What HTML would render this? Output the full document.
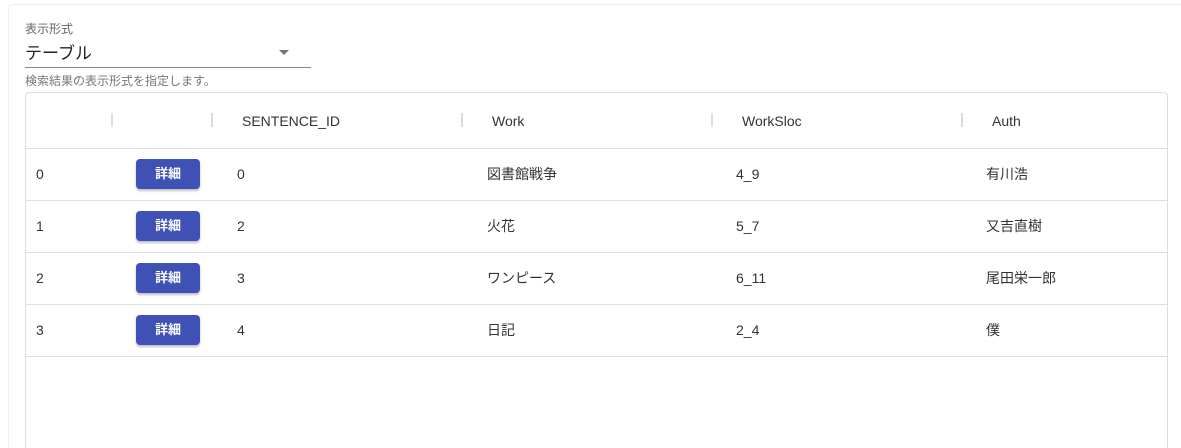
<!DOCTYPE html>
<html style="height:448px;overflow:hidden"><head><meta charset="utf-8"><style>
*{box-sizing:border-box;margin:0;padding:0}
body{width:1181px;height:448px;background:#fff;font-family:"Liberation Sans","Noto Sans CJK JP",sans-serif;overflow:hidden;position:relative;color:#333}
.outer{position:absolute;left:8px;top:4px;width:1190px;height:460px;border:1px solid #eee;border-radius:5px;background:#fff}
.lbl{position:absolute;left:25px;top:20px;font-size:12px;color:#666}
.sel{position:absolute;left:25px;top:39px;font-size:17px;color:#222}
.line{position:absolute;left:25px;top:67px;width:286px;height:1px;background:#888}
.arrow{position:absolute;left:279px;top:50px;width:0;height:0;border-left:5px solid transparent;border-right:5px solid transparent;border-top:5px solid #777}
.help{position:absolute;left:25px;top:72px;font-size:12px;color:#777}
.tbl{position:absolute;left:25px;top:92px;width:1143px;height:370px;border:1px solid #ddd;border-radius:4px}
.hr{position:absolute;left:0;width:100%;height:1px;background:#e0e0e0}
.t{position:absolute;font-size:14px;color:#333;line-height:16px}
.sep{position:absolute;top:20px;width:2px;height:14px;background:#ddd}
.btn{position:absolute;left:110px;width:64px;height:30px;background:#3f51b5;color:#fff;font-size:13px;font-weight:bold;border-radius:4px;text-align:center;line-height:30px;box-shadow:0 2px 2px rgba(0,0,0,.25)}
</style></head><body>
<div class="outer"></div>
<div class="lbl">表示形式</div>
<div class="sel">テーブル</div>
<div class="arrow"></div>
<div class="line"></div>
<div class="help">検索結果の表示形式を指定します。</div>
<div class="tbl">
<div class="sep" style="left:85px"></div>
<div class="sep" style="left:185px"></div>
<div class="sep" style="left:435px"></div>
<div class="sep" style="left:685px"></div>
<div class="sep" style="left:935px"></div>
<div class="t" style="left:216px;top:20px">SENTENCE_ID</div>
<div class="t" style="left:466px;top:20px">Work</div>
<div class="t" style="left:716px;top:20px">WorkSloc</div>
<div class="t" style="left:966px;top:20px">Auth</div>
<div class="hr" style="top:55px"></div>
<div class="t" style="left:10px;top:73px">0</div><div class="btn" style="top:66px">詳細</div><div class="t" style="left:211px;top:73px">0</div><div class="t" style="left:461px;top:73px">図書館戦争</div><div class="t" style="left:710px;top:73px">4_9</div><div class="t" style="left:960px;top:73px">有川浩</div>
<div class="hr" style="top:107px"></div>
<div class="t" style="left:10px;top:125px">1</div><div class="btn" style="top:118px">詳細</div><div class="t" style="left:211px;top:125px">2</div><div class="t" style="left:461px;top:125px">火花</div><div class="t" style="left:710px;top:125px">5_7</div><div class="t" style="left:960px;top:125px">又吉直樹</div>
<div class="hr" style="top:159px"></div>
<div class="t" style="left:10px;top:177px">2</div><div class="btn" style="top:170px">詳細</div><div class="t" style="left:211px;top:177px">3</div><div class="t" style="left:461px;top:177px">ワンピース</div><div class="t" style="left:710px;top:177px">6_11</div><div class="t" style="left:960px;top:177px">尾田栄一郎</div>
<div class="hr" style="top:211px"></div>
<div class="t" style="left:10px;top:229px">3</div><div class="btn" style="top:222px">詳細</div><div class="t" style="left:211px;top:229px">4</div><div class="t" style="left:461px;top:229px">日記</div><div class="t" style="left:710px;top:229px">2_4</div><div class="t" style="left:960px;top:229px">僕</div>
<div class="hr" style="top:263px"></div>
</div>
</body></html>
